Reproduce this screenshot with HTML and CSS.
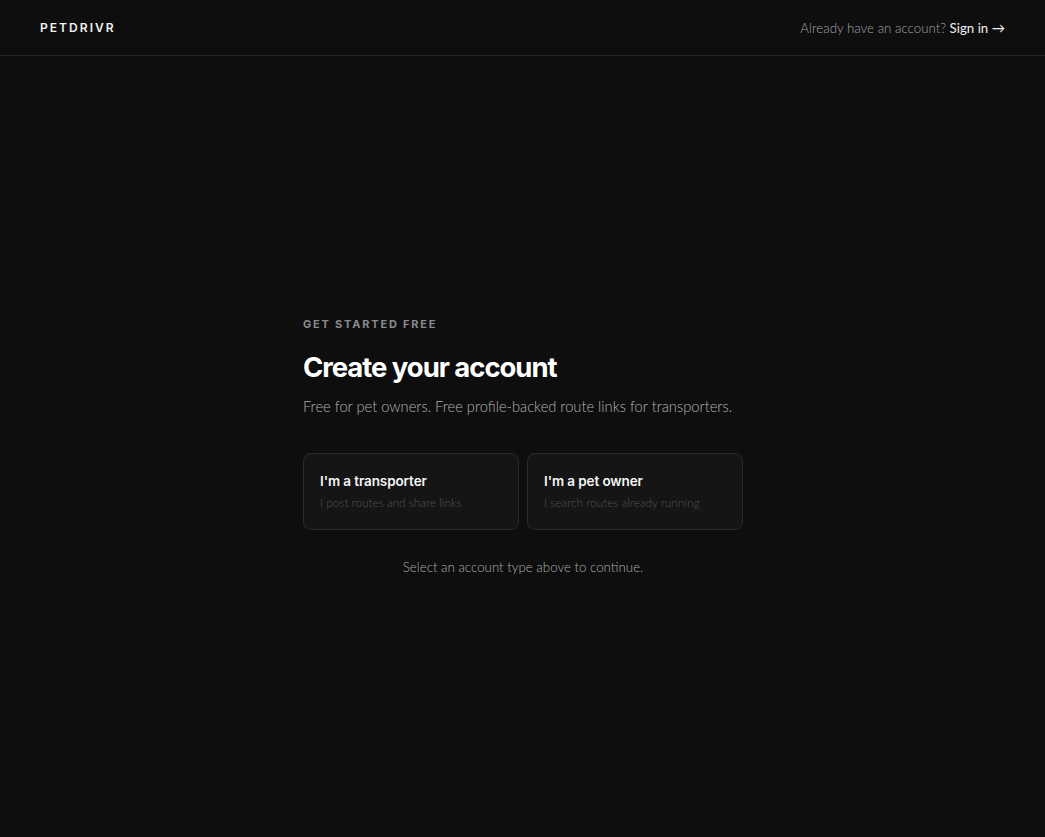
FILE: index.html
```html
<!DOCTYPE html>
<html lang="en">
<head>
<meta charset="utf-8">
<title>PetDrivr — Create your account</title>
<link rel="stylesheet" href="styles.css">
</head>
<body>
<div class="page">
  <header class="topbar">
    <div class="logo">PETDRIVR</div>
    <div class="signin">Already have an account? <a href="#" class="signin-link">Sign in →</a></div>
  </header>
  <main class="main">
    <section class="panel">
      <div class="eyebrow">GET STARTED FREE</div>
      <h1 class="title">Create your account</h1>
      <p class="lead">Free for pet owners. Free profile-backed route links for transporters.</p>
      <div class="choices">
        <button class="choice">
          <span class="choice-title">I'm a transporter</span>
          <span class="choice-sub">I post routes and share links</span>
        </button>
        <button class="choice">
          <span class="choice-title">I'm a pet owner</span>
          <span class="choice-sub">I search routes already running</span>
        </button>
      </div>
      <p class="hint">Select an account type above to continue.</p>
    </section>
  </main>
</div>
</body>
</html>
```

FILE: styles.css
```css
* { box-sizing: border-box; }
html, body { margin: 0; padding: 0; background: #0e0e0e; }
body {
  font-family: "Lato", "Liberation Sans", sans-serif;
  color: #fff;
}
.page {
  min-height: 837px;
  display: flex;
  flex-direction: column;
}
.topbar {
  height: 56px;
  display: flex;
  align-items: center;
  justify-content: space-between;
  padding: 0 40px;
  border-bottom: 1px solid #262626;
}
.logo {
  font-family: "Inter", "Liberation Sans", sans-serif;
  font-size: 12px;
  font-weight: 600;
  letter-spacing: 2.05px;
  color: #f2f2f2;
}
.signin {
  font-size: 13.3px;
  font-weight: 300;
  color: #a2a2a2;
}
.signin-link {
  color: #f0f0f0;
  text-decoration: none;
  font-weight: 400;
}
.main {
  flex: 1;
  display: flex;
  align-items: center;
  justify-content: center;
}
.panel {
  width: 440px;
  margin-left: 1px;
  margin-top: -1px;
}
.eyebrow {
  font-family: "Inter", "Liberation Sans", sans-serif;
  font-size: 11px;
  font-weight: 700;
  letter-spacing: 1.8px;
  color: #8a8a8a;
  line-height: 14px;
}
.title {
  font-family: "Inter", "Liberation Sans", sans-serif;
  margin: 18px 0 0;
  font-size: 27.5px;
  font-weight: 700;
  letter-spacing: -1.05px;
  line-height: 36px;
  color: #fff;
}
.lead {
  margin: 11px 0 0;
  font-size: 14.7px;
  font-weight: 300;
  color: #b2b2b2;
  line-height: 20px;
}
.choices {
  margin-top: 37px;
  display: grid;
  grid-template-columns: 1fr 1fr;
  gap: 8px;
}
.choice {
  height: 77px;
  background: #151515;
  border: 1px solid #2b2b2b;
  border-radius: 8px;
  padding: 0 16px;
  display: flex;
  flex-direction: column;
  justify-content: center;
  align-items: flex-start;
  gap: 5px;
  font-family: inherit;
  text-align: left;
  cursor: pointer;
}
.choice-title {
  font-family: "Inter", "Liberation Sans", sans-serif;
  font-size: 13.5px;
  font-weight: 600;
  letter-spacing: -0.1px;
  color: #f4f4f4;
  line-height: 18px;
}
.choice-sub {
  font-size: 11.8px;
  font-weight: 300;
  color: #525252;
  line-height: 16px;
}
.hint {
  margin: 28px 0 0;
  text-align: center;
  font-size: 13.3px;
  font-weight: 300;
  color: #acacac;
  line-height: 18px;
}
```
